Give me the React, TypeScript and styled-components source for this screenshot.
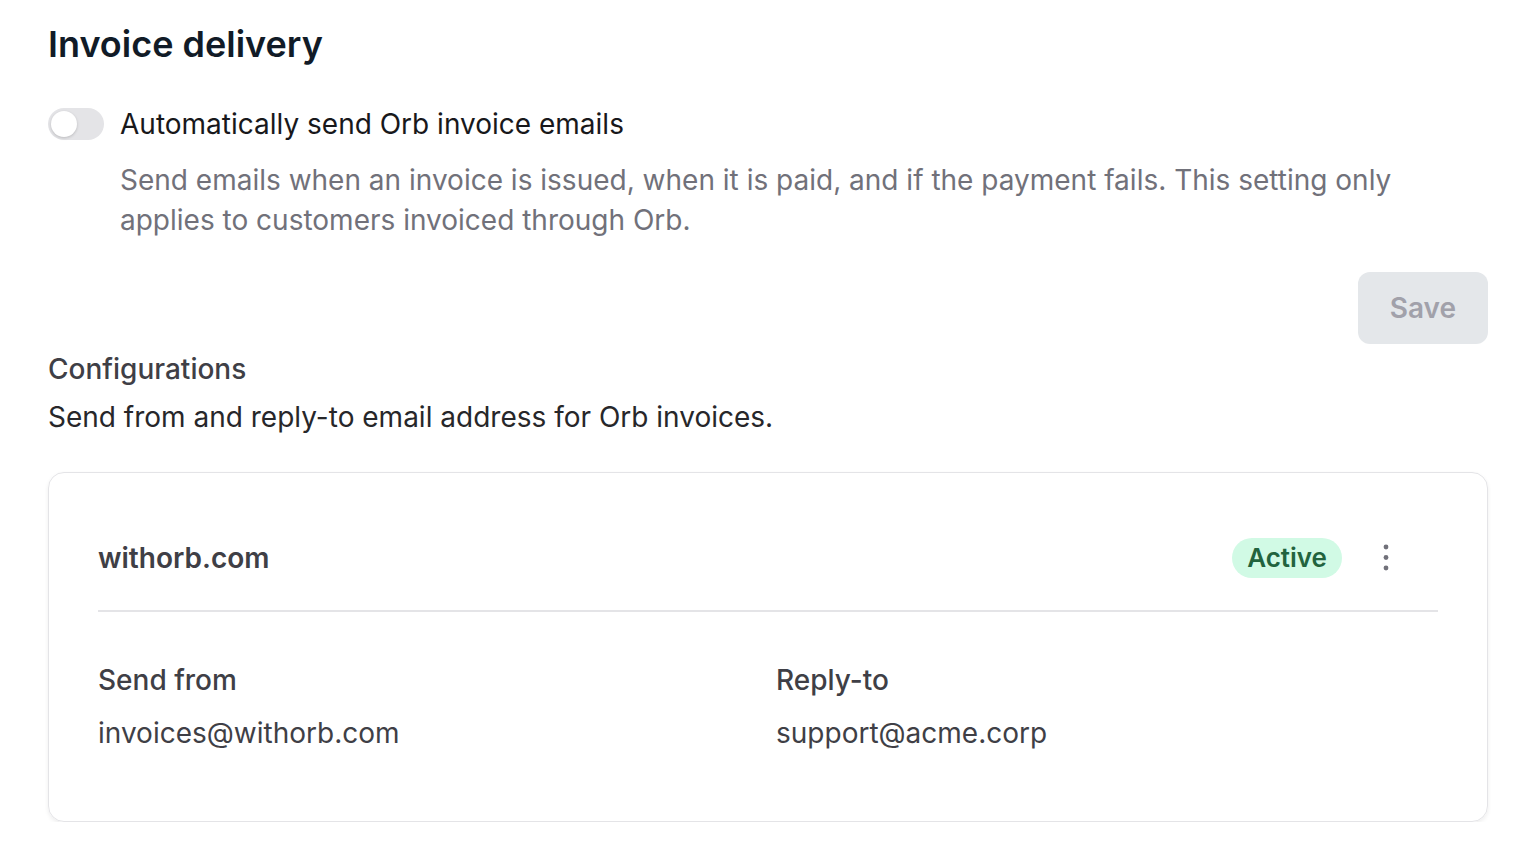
import styled, { createGlobalStyle } from 'styled-components'

const GlobalStyle = createGlobalStyle`
  html, body {
    margin: 0;
    padding: 0;
    background: #ffffff;
  }
  body {
    font-family: Inter, "Noto Sans", "Liberation Sans", sans-serif;
    -webkit-font-smoothing: antialiased;
  }
  * {
    box-sizing: border-box;
  }
`

const Page = styled.div`
  width: 1440px;
  margin-left: 48px;
  padding-top: 22px;
  display: flex;
  flex-direction: column;
`

const Title = styled.h1`
  margin: 0;
  font-size: 36px;
  line-height: 44px;
  font-weight: 600;
  color: #111b27;
`

const ToggleRow = styled.div`
  margin-top: 38px;
  display: flex;
  align-items: center;
  gap: 16px;
`

const Track = styled.button<{ $on?: boolean }>`
  width: 56px;
  height: 32px;
  border: none;
  padding: 0;
  border-radius: 16px;
  background: ${(p) => (p.$on ? '#2563eb' : '#e4e4e7')};
  display: flex;
  align-items: center;
  justify-content: ${(p) => (p.$on ? 'flex-end' : 'flex-start')};
  padding: 0 3px;
  cursor: pointer;
`

const Knob = styled.span`
  width: 26px;
  height: 26px;
  border-radius: 50%;
  background: #ffffff;
  box-shadow: 0 1px 3px rgba(0, 0, 0, 0.18);
`

const ToggleLabel = styled.span`
  font-size: 28px;
  line-height: 40px;
  color: #18181b;
`

const Description = styled.p`
  margin: 16px 0 0 72px;
  max-width: 1300px;
  font-size: 28px;
  line-height: 40px;
  color: #71717a;
`

const Actions = styled.div`
  display: flex;
  justify-content: flex-end;
  margin-top: 32px;
`

const Button = styled.button<{ $disabled?: boolean }>`
  height: 72px;
  padding: 0 32px;
  border: none;
  border-radius: 12px;
  font-family: inherit;
  font-size: 28px;
  font-weight: 600;
  background: ${(p) => (p.$disabled ? '#e4e7ea' : '#18181b')};
  color: ${(p) => (p.$disabled ? '#a1a1aa' : '#ffffff')};
`

const SectionTitle = styled.h2`
  margin: 5px 0 0;
  font-size: 28px;
  line-height: 40px;
  font-weight: 500;
  color: #3f3f46;
`

const SectionText = styled.p`
  margin: 8px 0 0;
  font-size: 28px;
  line-height: 40px;
  color: #27272a;
`

const Card = styled.div`
  margin-top: 35px;
  border: 1px solid #e4e4e7;
  border-radius: 16px;
  box-shadow: 0 2px 4px rgba(0, 0, 0, 0.07);
  padding: 65px 49px 68px;
`

const CardHeader = styled.div`
  display: flex;
  align-items: center;
  gap: 24px;
  padding-right: 32px;
  padding-bottom: 32px;
  border-bottom: 2px solid #e4e4e7;
`

const Domain = styled.span`
  flex: 1;
  font-size: 28px;
  line-height: 40px;
  font-weight: 600;
  color: #3f3f46;
`

const Badge = styled.span`
  height: 40px;
  padding: 0 15px;
  border-radius: 20px;
  background: #d1fae5;
  color: #22633e;
  font-size: 26px;
  line-height: 40px;
  font-weight: 600;
`

const MenuButton = styled.button`
  width: 40px;
  height: 40px;
  border: none;
  background: transparent;
  padding: 0;
  display: flex;
  align-items: center;
  justify-content: center;
  color: #71717a;
`

const Fields = styled.div`
  margin-top: 48px;
  display: grid;
  grid-template-columns: 1fr 1fr;
  column-gap: 16px;
`

const Field = styled.div`
  display: flex;
  flex-direction: column;
  gap: 13px;
`

const FieldLabel = styled.span`
  font-size: 28px;
  line-height: 40px;
  font-weight: 500;
  color: #3f3f46;
`

const FieldValue = styled.span`
  font-size: 28px;
  line-height: 40px;
  color: #3f3f46;
`

const KebabIcon = () => (
  <svg width="6" height="28" viewBox="0 0 6 28" fill="currentColor">
    <circle cx="3" cy="3" r="2.4" />
    <circle cx="3" cy="13.5" r="2.4" />
    <circle cx="3" cy="24" r="2.4" />
  </svg>
)

export default function App() {
  return (
    <>
      <GlobalStyle />
      <Page>
        <Title>Invoice delivery</Title>
        <ToggleRow>
          <Track aria-label="toggle">
            <Knob />
          </Track>
          <ToggleLabel>Automatically send Orb invoice emails</ToggleLabel>
        </ToggleRow>
        <Description>
          Send emails when an invoice is issued, when it is paid, and if the payment fails. This setting only
          applies to customers invoiced through Orb.
        </Description>
        <Actions>
          <Button $disabled>Save</Button>
        </Actions>
        <SectionTitle>Configurations</SectionTitle>
        <SectionText>Send from and reply-to email address for Orb invoices.</SectionText>
        <Card>
          <CardHeader>
            <Domain>withorb.com</Domain>
            <Badge>Active</Badge>
            <MenuButton aria-label="more">
              <KebabIcon />
            </MenuButton>
          </CardHeader>
          <Fields>
            <Field>
              <FieldLabel>Send from</FieldLabel>
              <FieldValue>invoices@withorb.com</FieldValue>
            </Field>
            <Field>
              <FieldLabel>Reply-to</FieldLabel>
              <FieldValue>support@acme.corp</FieldValue>
            </Field>
          </Fields>
        </Card>
      </Page>
    </>
  )
}
